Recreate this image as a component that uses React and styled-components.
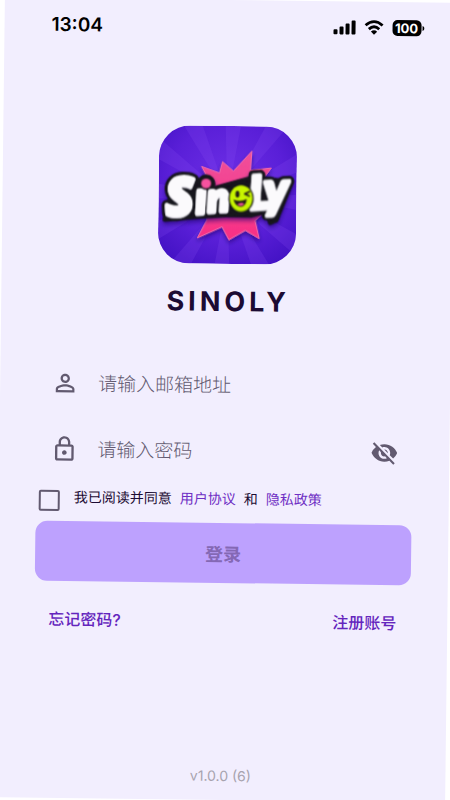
import { useState } from "react";
import styled, { createGlobalStyle } from "styled-components";
import {
  MdOutlineLock,
  MdPersonOutline,
  MdVisibility,
  MdVisibilityOff,
} from "react-icons/md";

const RAYS = Array.from({ length: 12 }, (_, i) => i * 30 + 4);

const Logo = () => (
  <LogoArt viewBox="24 32 416 416" role="img" aria-label="Sinoly">
    <defs>
      <radialGradient id="sky" cx="50%" cy="40%" r="70%">
        <stop offset="0" stopColor="#6d2fe6" />
        <stop offset="0.6" stopColor="#5a1fd8" />
        <stop offset="1" stopColor="#4312c4" />
      </radialGradient>
      <linearGradient id="burst" x1="0" y1="0" x2="0" y2="1">
        <stop offset="0" stopColor="#f0509a" />
        <stop offset="1" stopColor="#f92f84" />
      </linearGradient>
      <filter id="shade" x="-20%" y="-20%" width="140%" height="150%">
        <feDropShadow dx="0" dy="9" stdDeviation="7" floodColor="#1c0670" floodOpacity="0.6" />
      </filter>
      <clipPath id="tile">
        <rect x="24" y="32" width="416" height="416" rx="94" />
      </clipPath>
    </defs>
    <g clipPath="url(#tile)">
      <rect x="24" y="32" width="416" height="416" fill="url(#sky)" />
      {RAYS.map((deg) => (
        <path
          key={deg}
          d="M232 245L196 -90H268Z"
          fill="#8a50f5"
          opacity="0.2"
          transform={`rotate(${deg} 232 245)`}
        />
      ))}
      <g filter="url(#shade)">
        <path
          d="M153 155L207 174L216 140L249 168L304 107L300 165L363 157L336 193L345 290L316 316L329 370L287 346L238 375L217 336L143 370L171 316L178 200Z"
          fill="url(#burst)"
          stroke="#f46aa9"
          strokeWidth="3"
          strokeLinejoin="round"
        />
      </g>
      <g filter="url(#shade)">
        <g fill="#17131d" stroke="#17131d" strokeWidth="31" strokeLinejoin="round">
          <path
            d="M44 316L152 306L238 300L306 300L350 288L362 322L380 314L425 198L345 190L307 187L175 225L136 200L80 206L62 238Z"
            strokeWidth="14"
          />
          <Glyphs />
          <circle cx="167" cy="207" r="13" />
          <ellipse cx="273" cy="250" rx="31" ry="38" />
        </g>
      </g>
      <g fill="#c9c6d2" stroke="#c9c6d2" strokeWidth="12" strokeLinejoin="round" transform="translate(0 3)">
        <Glyphs />
      </g>
      <g fill="#fbfafc" stroke="#fbfafc" strokeWidth="12" strokeLinejoin="round">
        <Glyphs />
      </g>
      <circle cx="167" cy="207" r="18" fill="#17131d" />
      <circle cx="167" cy="206" r="15" fill="#f7529f" />
      <ellipse cx="273" cy="250" rx="38" ry="43" fill="#17131d" />
      <ellipse cx="273" cy="251" rx="34" ry="39" fill="#8fc400" />
      <ellipse cx="273" cy="248" rx="34" ry="38" fill="#c8f500" />
      <ellipse cx="262" cy="237" rx="6" ry="10" fill="#221b16" />
      <path
        d="M298 229L284 236L297 242"
        fill="none"
        stroke="#221b16"
        strokeWidth="5"
        strokeLinecap="round"
        strokeLinejoin="round"
      />
      <path d="M250 253Q272 262 290 251Q289 273 273 275Q257 275 250 253Z" fill="#221b16" />
      <path d="M262 268Q274 258 283 267Q274 277 262 268Z" fill="#f0509a" />
    </g>
  </LogoArt>
);

const Glyphs = () => (
  <g fontFamily="Lato, sans-serif" fontWeight="900" fontStyle="italic">
    <text
      fontSize="158"
      fontFamily="'Open Sans', sans-serif"
      fontWeight="800"
      transform="translate(48 305) rotate(-4)"
    >
      S
    </text>
    <text fontSize="134" transform="translate(138 296) rotate(-4)">ı</text>
    <text fontSize="120" transform="translate(174 291) rotate(-4)">n</text>
    <text fontSize="138" transform="translate(300 281) rotate(-4)">L</text>
    <text fontSize="148" transform="translate(344 275) rotate(-3)">y</text>
  </g>
);

const StatusIcons = () => (
  <StatusArt viewBox="0 0 92 18" aria-hidden="true">
    <rect x="1" y="11" width="4" height="5" rx="1" />
    <rect x="7" y="8" width="4" height="8" rx="1" />
    <rect x="13" y="5" width="4" height="11" rx="1" />
    <rect x="19" y="2" width="4" height="14" rx="1" />
    <g fill="none" stroke="#000" strokeWidth="2.8">
      <path d="M33 6.6Q41.5 -1 50 6.6" />
      <path d="M36.3 10.4Q41.5 5.6 46.7 10.4" />
    </g>
    <path d="M38.4 12.8Q41.5 10.2 44.6 12.8L41.5 16Z" />
    <rect x="60" y="1" width="29" height="16" rx="5" />
    <path d="M90 6.5Q92 7 92 9T90 11.5Z" />
    <text
      x="74"
      y="14"
      textAnchor="middle"
      fill="#fff"
      fontSize="13"
      fontWeight="700"
      fontFamily="Inter, sans-serif"
    >
      100
    </text>
  </StatusArt>
);

const App = () => {
  const [visible, setVisible] = useState(false);
  const [agreed, setAgreed] = useState(false);

  return (
    <Page>
      <GlobalStyle />
      <Screen>
        <StatusBar>
          <Time>13:04</Time>
          <StatusIcons />
        </StatusBar>
        <Brand>
          <Logo />
          <h1>SINOLY</h1>
        </Brand>
        <Form onSubmit={(e) => e.preventDefault()}>
          <Field>
            <MdPersonOutline size={28} aria-hidden="true" />
            <input type="email" placeholder="请输入邮箱地址" aria-label="请输入邮箱地址" />
          </Field>
          <Field>
            <MdOutlineLock size={28} aria-hidden="true" />
            <input
              type={visible ? "text" : "password"}
              placeholder="请输入密码"
              aria-label="请输入密码"
            />
            <EyeButton
              type="button"
              aria-label="显示密码"
              onClick={() => setVisible(!visible)}
            >
              {visible ? <MdVisibility size={28} /> : <MdVisibilityOff size={28} />}
            </EyeButton>
          </Field>
          <Agreement>
            <input
              id="agree"
              type="checkbox"
              checked={agreed}
              onChange={(e) => setAgreed(e.target.checked)}
            />
            <AgreementText>
              <label htmlFor="agree">我已阅读并同意</label>
              <a href="#terms">用户协议</a>
              <span>和</span>
              <a href="#privacy">隐私政策</a>
            </AgreementText>
          </Agreement>
          <LoginButton type="submit" disabled={!agreed}>
            登录
          </LoginButton>
          <Links>
            <a href="#forgot">忘记密码?</a>
            <a href="#register">注册账号</a>
          </Links>
        </Form>
        <Version>v1.0.0 (6)</Version>
      </Screen>
    </Page>
  );
};

export default App;

const GlobalStyle = createGlobalStyle`
  * {
    box-sizing: border-box;
  }

  body {
    margin: 0;
    background: #fff;
    font-family: Inter, "Noto Sans CJK SC", sans-serif;
  }

  input, button {
    font-family: inherit;
  }

  a {
    text-decoration: none;
  }
`;

const Page = styled.div`
  min-height: 100vh;
  display: flex;
  overflow: hidden;
`;

const Screen = styled.main`
  flex: 1;
  min-width: 0;
  display: flex;
  flex-direction: column;
  background: #f2eefe;
  transform: rotate(0.7deg);
`;

const StatusBar = styled.header`
  display: flex;
  align-items: center;
  justify-content: space-between;
  height: 52px;
  padding: 0 30px 0 47px;
`;

const Time = styled.time`
  font-size: 19px;
  font-weight: 600;
  color: #000;
`;

const StatusArt = styled.svg`
  width: 92px;
  height: 18px;
`;

const Brand = styled.section`
  display: flex;
  flex-direction: column;
  align-items: center;
  gap: 20px;
  padding-top: 74px;

  h1 {
    margin: 0;
    padding-left: 4px;
    font-size: 27px;
    line-height: 36px;
    font-weight: 700;
    letter-spacing: 4px;
    color: #1c0b33;
  }
`;

const LogoArt = styled.svg`
  width: 138px;
  height: 138px;
`;

const Form = styled.form`
  display: flex;
  flex-direction: column;
  padding: 37px 37px 0;
`;

const Field = styled.div`
  display: flex;
  align-items: center;
  gap: 19px;
  height: 56px;
  margin-bottom: 10px;
  padding: 0 14px;
  color: #625a70;

  input {
    flex: 1;
    width: 0;
    padding: 0;
    border: 0;
    outline: 0;
    background: none;
    font-size: 19px;
    font-weight: 300;
    color: #1c0b33;
  }

  input::placeholder {
    color: #625a70;
    opacity: 1;
  }
`;

const EyeButton = styled.button`
  display: flex;
  padding: 0;
  border: 0;
  background: none;
  color: #625a70;
`;

const Agreement = styled.div`
  display: flex;
  align-items: center;
  gap: 14px;
  height: 26px;
  padding-left: 3px;

  input {
    appearance: none;
    width: 21px;
    height: 21px;
    margin: 0;
    border: 2px solid #625a70;
    border-radius: 2px;
  }

  input:checked {
    background: #6a25d0;
  }
`;

const AgreementText = styled.div`
  display: flex;
  gap: 8px;
  padding-bottom: 7px;
  font-size: 14px;
  line-height: 20px;
  color: #1c0b33;

  a {
    color: #6f2fc4;
  }
`;

const LoginButton = styled.button`
  height: 60px;
  margin-top: 8px;
  border: 0;
  border-radius: 12px;
  background: #bda1fe;
  font-size: 18px;
  font-weight: 600;
  color: #8468b4;
`;

const Links = styled.nav`
  display: flex;
  justify-content: space-between;
  padding: 26px 14px 0;
  font-size: 16px;
  line-height: 24px;
  font-weight: 500;

  a {
    color: #6425bd;
  }
`;

const Version = styled.footer`
  margin-top: auto;
  padding-bottom: 14px;
  font-size: 14px;
  line-height: 20px;
  text-align: center;
  color: #a7a3ae;
`;
